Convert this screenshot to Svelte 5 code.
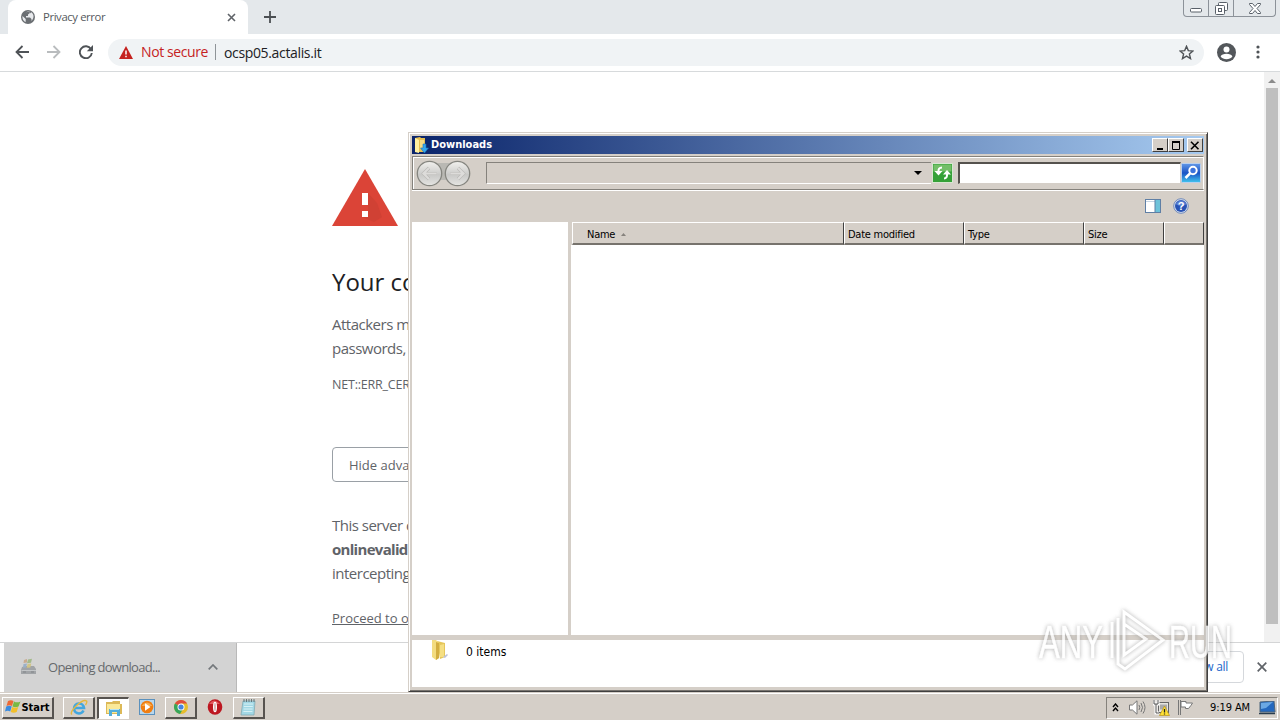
<script>
  const columns = [
    { label: 'Name', width: 272, sorted: true },
    { label: 'Date modified', width: 120 },
    { label: 'Type', width: 120 },
    { label: 'Size', width: 80 },
    { label: '', width: 40 }
  ]
</script>

<div class="desktop">
  <div class="browser">
    <div class="tabs">
      <div class="tab">
        <svg class="globe" width="14" height="14" viewBox="0 0 14 14">
          <circle cx="7" cy="7" r="7" fill="#6b6f73" />
          <path d="M1.5 6l3.2 3v3.1C2.5 11.200 1 9 1.500 6zM5 2.200l3.500-.7v1.800L7 4.500v1.500H5v1.500h4l1.500 1.500v2c3-3 2.500-7-.3-8.700L9 3.500 7.500 1.200z" fill="#e8eaed" />
        </svg>
        <span>Privacy error</span>
        <svg class="close" width="9" height="9" viewBox="0 0 9 9"><path d="M1 1l7 7M8 1L1 8" stroke="#5f6368" stroke-width="1.600" /></svg>
      </div>
      <svg class="plus" width="12" height="12" viewBox="0 0 12 12"><path d="M6 0v12M0 6h12" stroke="#4b4f53" stroke-width="1.800" /></svg>
      <div class="caption">
        <i><svg width="12" height="5" viewBox="0 0 12 5"><rect x=".5" y=".5" width="11" height="3.500" rx="1" fill="#fff" stroke="#596069" /></svg></i>
        <i><svg width="13" height="13" viewBox="0 0 13 13" fill="none" stroke="#596069"><rect x="3.500" y=".5" width="9" height="8" rx="1" fill="#fff" /><rect x=".5" y="3.500" width="9" height="9" rx="1" fill="#fff" /><rect x="3.500" y="6.500" width="3" height="3" /></svg></i>
        <i><svg width="12" height="11" viewBox="0 0 12 11"><path d="M.5.500h3L6 3.500 8.500.500h3v1L8 5.500l3.500 4v1h-3L6 7.500l-2.500 3h-3v-1l3.500-4-3.500-4z" fill="#fff" stroke="#596069" /></svg></i>
      </div>
    </div>

    <div class="toolbar">
      <svg width="14" height="14" viewBox="0 0 14 14"><path d="M14 7H1.500M7.500 1L1.500 7l6 6" fill="none" stroke="#4f5357" stroke-width="1.800" /></svg>
      <svg width="14" height="14" viewBox="0 0 14 14"><path d="M0 7h12.500M6.500 1l6 6-6 6" fill="none" stroke="#b9bcbe" stroke-width="1.800" /></svg>
      <svg width="14" height="14" viewBox="0 0 14 14"><path d="M12 4.200A6 6 0 1 0 12.800 8" fill="none" stroke="#4f5357" stroke-width="1.900" /><path d="M14 0v6.200H7.800z" fill="#4f5357" /></svg>
      <div class="omnibox">
        <svg width="14" height="13" viewBox="0 0 14 13"><path d="M7 0l7 13H0z" fill="#c5221f" /><path d="M7 4.500v4M7 9.700v1.500" stroke="#fff" stroke-width="1.500" /></svg>
        <span class="insecure">Not secure</span>
        <span class="url">ocsp05.actalis.it</span>
        <svg class="star" width="15" height="15" viewBox="0 0 15 15"><path d="M7.500 1.300l1.800 4.300 4.600.4-3.500 3 1.100 4.600-4-2.500-4 2.500L4.600 9 1.100 6l4.600-.4z" fill="none" stroke="#4f5357" stroke-width="1.400" /></svg>
      </div>
      <svg class="avatar" width="19" height="19" viewBox="0 0 19 19"><circle cx="9.500" cy="9.500" r="9.500" fill="#53575b" /><circle cx="9.500" cy="6.500" r="3" fill="#fff" /><path d="M3.600 13.500c1.200-3.800 10.600-3.800 11.800 0-2.600 3.500-9.200 3.500-11.800 0z" fill="#fff" /></svg>
      <svg class="dots" width="4" height="14" viewBox="0 0 4 14" fill="#4f5357"><circle cx="2" cy="2" r="1.600" /><circle cx="2" cy="7" r="1.600" /><circle cx="2" cy="12" r="1.600" /></svg>
    </div>

    <div class="page">
      <main>
        <svg class="warning" width="66" height="57" viewBox="0 0 66 57">
          <path d="M33 0l33 57H0z" fill="#db4437" />
          <path d="M36 24l9 10 5 14-8 5-12-5 6-6z" fill="#c53d31" opacity=".5" />
          <path d="M30 24h6v12h-6zM30 42h6v6h-6z" fill="#fff" />
        </svg>
        <h1>Your connection</h1>
        <p class="lead">Attackers might be<br />passwords, messages</p>
        <p class="code">NET::ERR_CERT</p>
        <button>Hide advanced</button>
        <p class="details">This server could not<br /><b>onlinevalid</b><br />intercepting your</p>
        <a href="#proceed">Proceed to ocsp05</a>
      </main>
      <div class="scrollbar">
        <svg width="8" height="4" viewBox="0 0 8 4"><path d="M4 0l4 4H0z" fill="#8b8b8b" /></svg>
        <div class="thumb"></div>
      </div>
    </div>

    <div class="shelf">
      <div class="download">
        <svg width="17" height="17" viewBox="0 0 17 17">
          <path d="M2 9l3-1h9l2 3v5H1v-4z" fill="#a1a4a7" />
          <path d="M1.500 12.500h14.500" stroke="#c3c6c8" />
          <path d="M4 2l3-1v3.500L3.500 5z" fill="#c9aa8e" /><path d="M8 1.500l4-.8-1 4-4 .5z" fill="#a3b98a" />
          <path d="M3.500 6L7 5.500 6 9.500l-3 .3z" fill="#9bb0c7" /><path d="M7.500 6l3.800-.5-1 4-3.600.2z" fill="#d1c485" />
          <path d="M3 14h3M11 14h3" stroke="#818589" />
        </svg>
        <span>Opening download...</span>
        <svg class="chevron" width="10" height="6" viewBox="0 0 10 6"><path d="M.7 5.300L5 1l4.300 4.300" fill="none" stroke="#73777b" stroke-width="1.700" /></svg>
      </div>
      <div class="showall">Show all</div>
      <svg class="dismiss" width="10" height="10" viewBox="0 0 10 10"><path d="M.7.700l8.600 8.600M9.300.700L.7 9.300" stroke="#5f6368" stroke-width="1.700" /></svg>
    </div>
  </div>

  <div class="explorer">
    <div class="title">
      <svg width="15" height="16" viewBox="0 0 15 16">
        <path d="M1 1l5-1 1 1h4v14H1z" fill="#e5bf52" /><path d="M1 1l4 2v13l-4-1z" fill="#fff0a0" /><path d="M6 3h4v9H6z" fill="#f6dc86" />
        <path d="M9 7h3v4h2.500L10.500 16 6.500 11H9z" fill="#35a7ee" stroke="#1872bb" stroke-width=".6" />
      </svg>
      <b>Downloads</b>
      <i><svg width="10" height="9" viewBox="0 0 10 9"><path d="M2 8h6" stroke="#000" stroke-width="2" /></svg></i>
      <i><svg width="10" height="9" viewBox="0 0 10 9"><path d="M1 1h8" stroke="#000" stroke-width="2" /><path d="M1.500 1v7.500h7V1" fill="none" stroke="#000" /></svg></i>
      <i class="x"><svg width="10" height="9" viewBox="0 0 10 9"><path d="M1 .8l7.500 7.500M8.500.800L1 8.300" stroke="#000" stroke-width="1.600" /></svg></i>
    </div>

    <div class="navbar">
      <svg class="travel" width="55" height="27" viewBox="0 0 55 27">
        <defs>
          <linearGradient id="disc" x2="0" y2="1"><stop offset="0" stop-color="#f2f1ee" /><stop offset=".45" stop-color="#d2d2d0" /><stop offset=".55" stop-color="#c9c9c7" /><stop offset="1" stop-color="#e5e5e2" /></linearGradient>
        </defs>
        <path d="M13 3h29v17H13z" fill="#b9b8b3" />
        <path d="M20 23q7-6 15 0z" fill="#d5cfc8" />
        <circle cx="13.500" cy="13.500" r="12.200" fill="url(#disc)" stroke="#85857f" stroke-width="1.300" />
        <circle cx="41.500" cy="13.500" r="12.200" fill="url(#disc)" stroke="#85857f" stroke-width="1.300" />
        <path d="M20.500 13.500H8M13 8l-5.500 5.500L13 19M34.500 13.500H47M42 8l5.500 5.500L42 19" fill="none" stroke="#b9b8b5" stroke-width="3.200" />
        <path d="M20.500 13.500H8M13 8l-5.500 5.500L13 19M34.500 13.500H47M42 8l5.500 5.500L42 19" fill="none" stroke="#dddcda" stroke-width="2.200" />
      </svg>
      <div class="address">
        <svg width="8" height="4" viewBox="0 0 8 4"><path d="M0 0h8L4 4z" /></svg>
      </div>
      <svg class="refresh" width="21" height="20" viewBox="0 0 21 20">
        <rect x=".5" y=".5" width="20" height="19" fill="#35a138" stroke="#d7e6d1" /><path d="M1.500 1.500h18v7h-18z" fill="#73bf68" />
        <path d="M10 4.500Q6 4.500 6.500 9M12 15.500q3.500 0 3-5" fill="none" stroke="#fff" stroke-width="2" /><path d="M2.500 8h8l-4 4.500zM11 11.500l4-4.500 4 4.500z" fill="#fff" />
      </svg>
      <div class="search"></div>
      <svg class="lookup" width="20" height="20" viewBox="0 0 20 20">
        <defs><linearGradient id="blue" x2="0" y2="1"><stop offset="0" stop-color="#6298e7" /><stop offset=".5" stop-color="#1953c5" /><stop offset="1" stop-color="#41c5ee" /></linearGradient></defs>
        <rect x=".5" y=".5" width="19" height="19" rx="1" fill="url(#blue)" stroke="#b8cfee" />
        <circle cx="12" cy="7.500" r="3.700" fill="#3c73dc" stroke="#fff" stroke-width="2" /><path d="M9.300 10.200L4.500 15" stroke="#fff" stroke-width="2.600" />
      </svg>
    </div>

    <div class="commands">
      <svg width="16" height="14" viewBox="0 0 16 14"><rect x=".5" y=".5" width="15" height="13" fill="#fff" stroke="#5f7fa5" /><path d="M1 2.500h9" stroke="#c6d5e3" /><path d="M10 1h5v12h-5z" fill="#6dc2d9" /><path d="M10 1v12" stroke="#5f7fa5" /></svg>
      <svg width="16" height="16" viewBox="0 0 16 16"><circle cx="8" cy="8" r="7.300" fill="#d7e0ef" stroke="#728bbb" /><circle cx="8" cy="8" r="6" fill="#2853b5" /><path d="M2.500 6q5.500-7 11 0-5 4-11 0z" fill="#5a80d3" /><text x="8" y="12" text-anchor="middle">?</text></svg>
    </div>

    <div class="panes">
      <div class="tree"></div>
      <div class="list">
        <div class="header">
          {#each columns as column}
            <div class="cell" class:sorted={column.sorted} style="width: {column.width}px">
              {column.label}
              {#if column.sorted}
                <svg width="5" height="3" viewBox="0 0 5 3"><path d="M2.500 0L5 3H0z" fill="#86827d" /></svg>
              {/if}
            </div>
          {/each}
        </div>
      </div>
    </div>

    <div class="status">
      <svg width="18" height="21" viewBox="0 0 18 21">
        <path d="M6 1l8 2v14l-5 2z" fill="#e5c65b" /><path d="M1 0h4l3 3v15l-3 2-4-3z" fill="#f3dc80" /><path d="M5 2l3 1v15l-3 2z" fill="#d2ad40" /><path d="M9 5l4-1v13H9z" fill="#f5df83" /><path d="M12 17l4-3 1 1-3 3z" fill="#bdc1d8" />
      </svg>
      <span>0 items</span>
    </div>
  </div>

  <div class="taskbar">
    <div class="task start">
      <svg width="17" height="16" viewBox="0 0 17 16">
        <path d="M3 2q3-1.700 5.500 0L7 7Q4.500 5.500 1.500 7z" fill="#ed6935" /><path d="M9 2.500q3 1.700 6.500 0l-2 5q-3 1.500-6 0z" fill="#79b943" />
        <path d="M1.200 7.500q3-1.500 5.500 0l-1.500 5Q3 11 0 12.500z" fill="#398be0" /><path d="M7.200 8q3 1.500 6 0l-1.500 5q-3 1.500-6 0z" fill="#f3bf29" />
      </svg>
      <b>Start</b>
    </div>
    <div class="task ie">
      <svg width="18" height="17" viewBox="0 0 18 17"><path d="M13.500 11.500Q12 14.500 9 14.500A5 5 0 1 1 14 9H5" fill="none" stroke="#43a7df" stroke-width="2.600" /><path d="M2 15.500C-2 13 13-1 16.500 2q1 1-1 4" fill="none" stroke="#e5b83e" stroke-width="1.400" /></svg>
    </div>
    <div class="task active">
      <svg width="18" height="16" viewBox="0 0 18 16"><path d="M1 2h6l1-1h7v3h2v10H1z" fill="#dcb958" /><path d="M2 4h13v9H2z" fill="#fae999" /><path d="M4 9h11v7h-3v-4H7v4H4z" fill="#54aeda" /><path d="M5 9.500h9" stroke="#b8e4f4" /></svg>
    </div>
    <div class="task flat">
      <svg width="16" height="16" viewBox="0 0 16 16"><rect x=".5" y=".5" width="15" height="15" fill="#b8d7ed" stroke="#5b91bd" /><circle cx="8" cy="8" r="6.300" fill="#f07e12" /><path d="M2.500 7Q8 0 13.500 7z" fill="#f8ae52" /><path d="M6 4.200L11.500 8 6 11.800z" fill="#fff" /></svg>
    </div>
    <div class="task">
      <svg width="16" height="16" viewBox="0 0 16 16"><circle cx="8" cy="8" r="7" fill="#e6bd2c" /><path d="M8 8L1.900 4.500A7 7 0 0 1 14.100 4.500H8z" fill="#df4c3e" /><path d="M8 8L1.900 4.500A7 7 0 0 0 7 14.900l3-5z" fill="#36a55a" /><circle cx="8" cy="8" r="3.500" fill="#fff" /><circle cx="8" cy="8" r="2.600" fill="#4684df" /></svg>
    </div>
    <div class="task flat">
      <svg width="16" height="16" viewBox="0 0 16 16"><ellipse cx="8" cy="8" rx="7.300" ry="7.700" fill="#bd1720" /><path d="M2 5q5-7 11 0z" fill="#e2575d" /><ellipse cx="8" cy="8" rx="2" ry="5.300" fill="#fff" /><ellipse cx="8" cy="8" rx=".7" ry="4.300" fill="#c99" /></svg>
    </div>
    <div class="task">
      <svg width="17" height="17" viewBox="0 0 17 17"><path d="M3 2h12l-1 14H1z" fill="#a3d8e5" stroke="#7ba5af" stroke-width=".7" /><path d="M4 5h9M3.800 7.500h9M3.600 10h9M3.400 12.500h9" stroke="#d6f1f5" /><path d="M4 0v3M6.500 0v3M9 0v3M11.500 0v3M14 0v3" stroke="#66777a" /></svg>
    </div>

    <div class="tray">
      <svg width="7" height="9" viewBox="0 0 7 9"><path d="M1 4l2.500-3L6 4M1 8l2.500-3L6 8" fill="none" stroke="#000" stroke-width="1.400" /></svg>
      <svg class="sound" width="17" height="15" viewBox="0 0 17 15" fill="none" stroke="#777"><path d="M.5 5h3L8 .8v13.400L3.500 10h-3z" fill="#fff" /><path d="M10 5q1.500 2.500 0 5M12 3q3 4.500 0 9M14 1.500q4 6 0 12" /></svg>
      <svg class="network" width="17" height="16" viewBox="0 0 17 16"><rect x="5.500" y="2.500" width="10" height="10" fill="#e5e4df" stroke="#666" /><path d="M7 4.500h7v5H7z" fill="#aaa" /><path d="M1 0v4h4V0M3 4v9h3" fill="none" stroke="#fff" stroke-width="3" /><path d="M1 0v4h4V0M3 4v9h3" fill="none" stroke="#555" /><path d="M11.500 6l5 9.500h-10z" fill="#ffe133" stroke="#b99217" stroke-width=".7" /><path d="M11.500 9v3.500M11.500 13.500v1" stroke="#222" stroke-width="1.300" /></svg>
      <svg class="flag" width="17" height="15" viewBox="0 0 17 15"><path d="M1.500 0v15M3.500 0v15" stroke="#777" /><path d="M4 1.500h5v1.500h6.500q-1 2-4 5.500H8.500V7H4z" fill="#fff" stroke="#777" /></svg>
      <span>9:19 AM</span>
      <svg class="monitor" width="17" height="14" viewBox="0 0 17 14"><path d="M1 1l14-1 1 11H1z" fill="#2468be" stroke="#4c647b" /><path d="M2 2l12-1-7 6-5 1z" fill="#6ba8e3" /><path d="M0 12.500h16" stroke="#293c4d" stroke-width="1.500" /></svg>
    </div>
  </div>

  <svg class="watermark" width="196" height="66" viewBox="0 0 196 66">
    <path class="outline" d="M74 14v36M80 10v46l7 5 38-29L86 4v43l22-16-22-15" />
    <text x="1" y="50" textLength="64" lengthAdjust="spacingAndGlyphs">ANY</text>
    <text x="131" y="50" textLength="63" lengthAdjust="spacingAndGlyphs">RUN</text>
  </svg>
</div>

<style>
  :global(body) {
    margin: 0;
    overflow: hidden;
  }
  .desktop {
    position: relative;
    width: 1280px;
    height: 720px;
    overflow: hidden;
    font-family: 'Open Sans', 'Noto Sans', sans-serif;
    background: #fff;
  }
  svg {
    display: block;
    flex: none;
  }
  span, b {
    white-space: nowrap;
  }
  .browser {
    display: flex;
    flex-direction: column;
    height: 692px;
  }
  .tabs {
    display: flex;
    height: 34px;
    padding-left: 8px;
    background: #e4e8eb;
  }
  .tab {
    display: flex;
    align-items: center;
    box-sizing: border-box;
    width: 240px;
    padding: 0 12px 0 13px;
    border-radius: 8px 8px 0 0;
    background: #fff;
    font-size: 11.3px;
    color: #55595d;
  }
  .tab span {
    margin-left: 8px;
    padding-bottom: 2px;
    letter-spacing: -0.38px;
  }
  .close {
    margin-left: auto;
  }
  .plus {
    margin: 11px 0 0 16px;
  }
  .caption {
    display: flex;
    height: 16px;
    margin: 0 4px 0 auto;
    border: 1px solid #8c9299;
    border-top: 0;
    border-radius: 0 0 4px 4px;
  }
  .caption i {
    display: flex;
    align-items: center;
    justify-content: center;
    width: 24px;
    border-right: 1px solid #8c9299;
  }
  .caption i:first-child {
    align-items: flex-end;
    padding-bottom: 3px;
    box-sizing: border-box;
    width: 25px;
  }
  .caption i:last-child {
    width: 41px;
    border: 0;
  }
  .toolbar {
    display: flex;
    align-items: center;
    gap: 18px;
    box-sizing: border-box;
    height: 38px;
    padding: 0 20px 1px 15px;
    border-bottom: 1px solid #d7dadc;
  }
  .omnibox {
    display: flex;
    align-items: center;
    flex: 1;
    height: 27px;
    margin: 0 -5px 0 -3px;
    padding: 0 10px 0 11px;
    border-radius: 14px;
    background: #f0f3f5;
    font-size: 14px;
  }
  .insecure {
    margin-left: 8px;
    padding-right: 7px;
    border-right: 1px solid #8f9498;
    line-height: 16px;
    color: #c5221f;
    letter-spacing: -0.4px;
  }
  .url {
    margin-left: 8px;
    color: #202124;
    letter-spacing: -0.35px;
  }
  .star {
    margin-left: auto;
  }
  .avatar {
    margin-right: 2px;
  }
  .page {
    display: flex;
    height: 570px;
    overflow: hidden;
  }
  main {
    flex: 1;
    padding: 97px 0 0 332px;
    color: #5f6368;
    white-space: nowrap;
    font-size: 15px;
  }
  h1 {
    margin: 40px 0 0;
    font-size: 24px;
    line-height: 32px;
    font-weight: 400;
    color: #202124;
  }
  p {
    margin: 0;
    line-height: 24px;
    letter-spacing: -0.5px;
  }
  .lead {
    margin-top: 14px;
  }
  .code {
    margin-top: 13px;
    font-size: 12.5px;
    letter-spacing: -0.2px;
  }
  button {
    display: block;
    width: 150px;
    height: 35px;
    margin: 50px 0 31px;
    padding: 0 16px;
    border: 1px solid #9aa0a6;
    border-radius: 4px;
    background: #fff;
    text-align: left;
    font: 13px 'Open Sans', sans-serif;
    color: #5f6368;
  }
  .details b {
    letter-spacing: -0.7px;
  }
  main a {
    display: block;
    margin-top: 23px;
    font-size: 13px;
    line-height: 20px;
    color: #5f6368;
  }
  .scrollbar {
    display: flex;
    flex-direction: column;
    align-items: center;
    box-sizing: border-box;
    width: 16px;
    padding-top: 7px;
    background: #f1f1f1;
  }
  .thumb {
    width: 12px;
    height: 536px;
    margin-top: 5px;
    background: #bfbfbf;
  }
  .shelf {
    display: flex;
    align-items: center;
    box-sizing: border-box;
    height: 50px;
    padding: 0 13px 0 4px;
    border-top: 1px solid #d4d5d6;
  }
  .download {
    display: flex;
    align-items: center;
    box-sizing: border-box;
    width: 233px;
    height: 49px;
    padding: 0 18px 2px 16px;
    border-right: 1px solid #b9b9b9;
    background: #d3d3d3;
    font-size: 13px;
    color: #66696c;
    letter-spacing: -0.7px;
  }
  .download span {
    margin-left: 11px;
  }
  .chevron {
    margin-left: auto;
  }
  .showall {
    box-sizing: border-box;
    width: 83px;
    height: 32px;
    margin: 0 13px 2px auto;
    padding-right: 15px;
    border: 1px solid #d5d8dc;
    border-radius: 4px;
    text-align: right;
    font-size: 12px;
    line-height: 30px;
    color: #1b66c9;
    letter-spacing: -0.3px;
  }
  .dismiss {
    margin-bottom: 2px;
  }
  /* classic Windows frame: light outside edge, dark lower right edge */
  .explorer {
    position: absolute;
    left: 408px;
    top: 132px;
    display: flex;
    flex-direction: column;
    box-sizing: border-box;
    width: 800px;
    height: 560px;
    padding: 2px;
    border: 1px solid #d5cfc8;
    border-right-color: #404040;
    border-bottom-color: #404040;
    background: #d5cfc8;
    box-shadow: inset 1px 1px #fff, inset -1px -1px #77736e;
    font-family: 'DejaVu Sans Condensed', 'DejaVu Sans', sans-serif;
    font-size: 11px;
    color: #000;
  }
  .title {
    display: flex;
    align-items: center;
    height: 18px;
    margin: 1px 1px 2px;
    padding: 0 1px 0 2px;
    background: linear-gradient(90deg, #0a246a, #a6caf0);
    color: #fff;
  }
  .title b {
    flex: 1;
    margin-left: 2px;
    padding-bottom: 1px;
  }
  .title i {
    display: flex;
    align-items: center;
    justify-content: center;
    box-sizing: border-box;
    width: 16px;
    height: 14px;
    border: 1px solid #fff;
    border-right-color: #404040;
    border-bottom-color: #404040;
    background: #d5cfc8;
  }
  .title .x {
    margin-left: 3px;
  }
  .navbar {
    display: flex;
    align-items: center;
    box-sizing: border-box;
    height: 34px;
    padding: 0 2px 0 3px;
    margin: 0 1px;
    border: 1px solid #85827c;
    border-right-color: #fff;
    box-shadow: inset 1px 1px #fff, 0 1px #fff;
  }
  .address {
    display: flex;
    align-items: center;
    justify-content: flex-end;
    box-sizing: border-box;
    width: 445px;
    height: 22px;
    margin-left: 15px;
    padding-right: 9px;
    border: 1px solid #85827c;
    border-right: 0;
    border-bottom-color: #fff;
  }
  .refresh {
    margin-left: 1px;
  }
  .search {
    box-sizing: border-box;
    flex: 1;
    height: 22px;
    margin-left: 5px;
    border: 1px solid #d5cfc8;
    border-top: 2px solid #55524e;
    border-left: 2px solid #55524e;
    background: #fff;
  }
  .commands {
    display: flex;
    align-items: center;
    justify-content: flex-end;
    gap: 12px;
    height: 32px;
    padding-right: 16px;
  }
  .commands text {
    font: bold 11px 'Liberation Sans', sans-serif;
    fill: #fff;
  }
  .panes {
    display: flex;
    gap: 3px;
    height: 413px;
    margin: 0 1px;
  }
  .tree {
    width: 157px;
    background: #fff;
  }
  .list {
    flex: 1;
    background: #fff;
  }
  .header {
    display: flex;
    height: 23px;
    padding-left: 1px;
    background: #d5cfc8;
  }
  .cell {
    display: flex;
    align-items: center;
    gap: 6px;
    box-sizing: border-box;
    padding: 2px 0 0 3px;
    border: 1px solid #fff;
    border-right-color: #404040;
    border-bottom: 2px solid #77736d;
    background: #d5cfc8;
    letter-spacing: -0.25px;
  }
  .sorted {
    padding-left: 14px;
  }
  .status {
    display: flex;
    height: 47px;
    margin: 5px 1px 0;
    padding-left: 19px;
    background: #fff;
  }
  .status span {
    margin: 5px 0 0 17px;
    font-size: 12px;
  }
  .taskbar {
    display: flex;
    align-items: center;
    box-sizing: border-box;
    height: 28px;
    padding: 2px 2px 0;
    border-top: 1px solid #d5cfc8;
    background: #d5cfc8;
    box-shadow: inset 0 1px #fff;
    font-family: 'DejaVu Sans Condensed', 'DejaVu Sans', sans-serif;
    font-size: 11px;
  }
  .task {
    display: flex;
    align-items: center;
    justify-content: center;
    box-sizing: border-box;
    width: 32px;
    height: 22px;
    margin-left: 2px;
    border: 1px solid #fff;
    border-right: 2px solid #57534f;
    border-bottom: 2px solid #57534f;
  }
  .start {
    width: 52px;
    margin: 0 7px 0 0;
  }
  .start b {
    margin-left: -1px;
  }
  .active {
    border: 2px solid #57534f;
    border-right: 1px solid #fff;
    border-bottom: 1px solid #fff;
    background: #fff;
  }
  .flat {
    border-color: transparent;
  }
  .tray {
    display: flex;
    align-items: center;
    box-sizing: border-box;
    width: 172px;
    height: 22px;
    margin-left: auto;
    padding: 0 1px 0 5px;
    border: 1px solid #85827c;
    border-right-color: #fff;
    border-bottom-color: #fff;
  }
  .sound {
    margin-left: 10px;
  }
  .network, .flag {
    margin-left: 7px;
  }
  .tray span {
    margin-left: auto;
    letter-spacing: -0.1px;
  }
  .monitor {
    margin-left: 9px;
  }
  .watermark {
    position: absolute;
    left: 1038px;
    top: 608px;
    overflow: visible;
    font: 46px 'Liberation Sans Narrow', 'Liberation Sans', sans-serif;
    fill: #fff;
    stroke: #fff;
    stroke-width: 0.5px;
    opacity: 0.8;
    filter: drop-shadow(0 0 2px #999);
  }
  .outline {
    fill: none;
    stroke-width: 3px;
  }
</style>
